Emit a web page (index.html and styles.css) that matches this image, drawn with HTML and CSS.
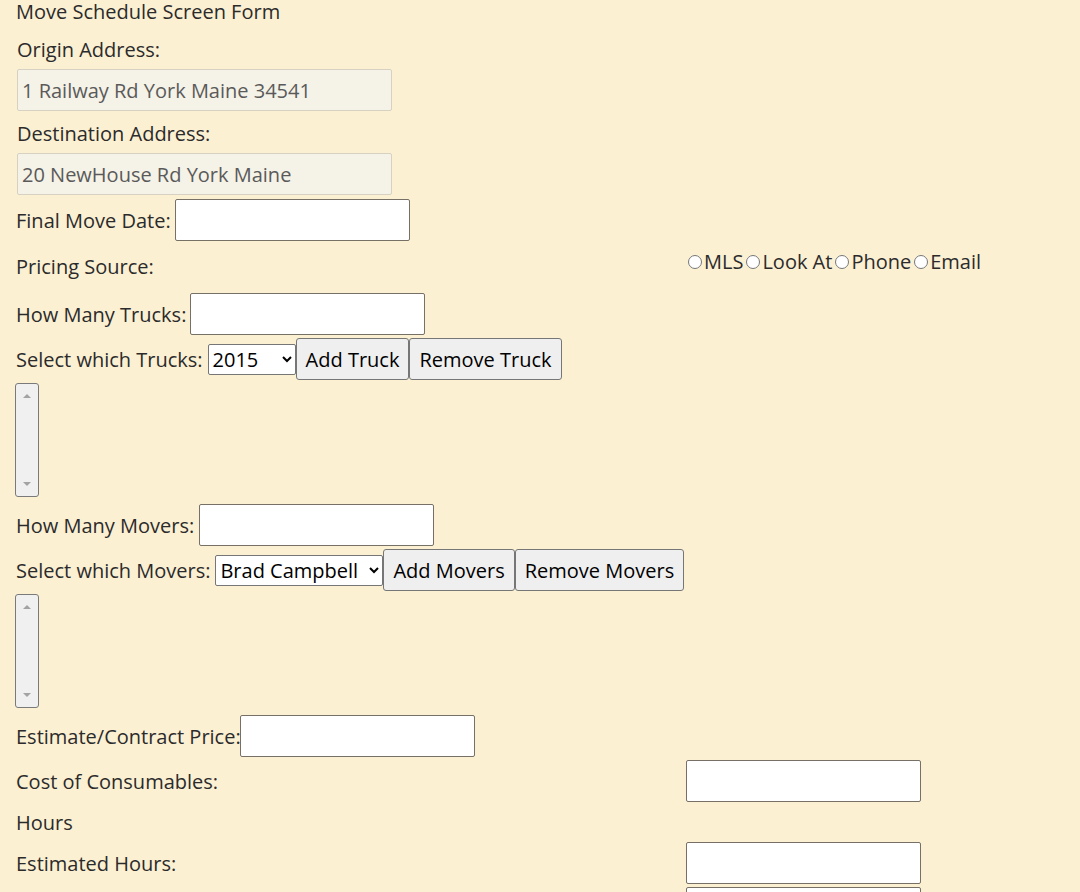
FILE: index.html
```html
<!DOCTYPE html>
<html>
<head>
<meta charset="utf-8">
<title>Move Schedule Screen Form</title>
<link rel="stylesheet" href="styles.css">
</head>
<body>
<form class="form">
  <div class="title">Move Schedule Screen Form</div>

  <label class="block-label first">Origin Address:</label>
  <input class="addr" type="text" value="1 Railway Rd York Maine 34541" disabled>

  <label class="block-label">Destination Address:</label>
  <input class="addr" type="text" value="20 NewHouse Rd York Maine" disabled>

  <div class="row row-date">
    <label>Final Move Date:</label><input class="field" type="text">
  </div>

  <div class="grid-row pricing">
    <label class="plabel">Pricing Source:</label>
    <div class="radios">
      <input type="radio" name="src"><span>MLS</span><input type="radio" name="src"><span>Look At</span><input type="radio" name="src"><span>Phone</span><input type="radio" name="src"><span>Email</span>
    </div>
  </div>

  <div class="row row-trucks">
    <label>How Many Trucks:</label><input class="field" type="text">
  </div>

  <div class="row row-select">
    <label>Select which Trucks:</label><select class="sel sel-truck"><option>2015</option></select><button type="button" class="btn">Add Truck</button><button type="button" class="btn">Remove Truck</button>
  </div>

  <div class="listbox"><span class="arrow up"></span><span class="arrow down"></span></div>

  <div class="row row-movers">
    <label>How Many Movers:</label><input class="field" type="text">
  </div>

  <div class="row row-select">
    <label>Select which Movers:</label><select class="sel sel-mover"><option>Brad Campbell</option></select><button type="button" class="btn">Add Movers</button><button type="button" class="btn">Remove Movers</button>
  </div>

  <div class="listbox"><span class="arrow up"></span><span class="arrow down"></span></div>

  <div class="row row-price">
    <label>Estimate/Contract Price:</label><input class="field" type="text">
  </div>

  <div class="grid-row cost">
    <label>Cost of Consumables:</label><input class="field" type="text">
  </div>

  <div class="hours">Hours</div>

  <div class="grid-row after-hours">
    <label>Estimated Hours:</label><input class="field" type="text">
  </div>

  <div class="grid-row next">
    <label></label><input class="field" type="text">
  </div>
</form>
</body>
</html>
```

FILE: styles.css
```css
html, body {
  margin: 0;
  padding: 0;
  background: #fcf0d3;
}

body {
  font-family: "Open Sans", "Noto Sans", sans-serif;
  font-size: 20px;
  color: #2b2b2b;
  overflow: hidden;
  height: 892px;
}

.form {
  display: flex;
  flex-direction: column;
  align-items: flex-start;
  padding-left: 16px;
}

.title {
  height: 24px;
  line-height: 24px;
}

.block-label {
  display: block;
  height: 26px;
  line-height: 28px;
  margin-top: 12px;
  margin-left: 1px;
}

.block-label + .addr {
  margin-top: 7px;
}

.addr + .block-label {
  margin-top: 9px;
}

.addr {
  box-sizing: border-box;
  width: 375px;
  height: 42px;
  margin-left: 1px;
  padding: 0 4px;
  font: inherit;
  color: #5a5a5a;
  background: #f5f2e7;
  border: 1px solid #d6d1c2;
  border-radius: 2px;
}

.row {
  display: flex;
  align-items: center;
  height: 42px;
  margin-top: 3px;
}

.row-date { margin-top: 4px; }
.row-trucks { margin-top: 9px; }
.row-movers { margin-top: 7px; }
.row-price { margin-top: 7px; }

.row label {
  white-space: nowrap;
}

.field {
  box-sizing: border-box;
  width: 235px;
  height: 42px;
  margin: 0;
  padding: 0 4px;
  font: inherit;
  background: #fff;
  border: 1px solid #767067;
  border-radius: 2px;
}

.row-date .field { margin-left: 4px; }
.row-trucks .field { margin-left: 4px; }
.row-movers .field { margin-left: 5px; }
.row-price .field { margin-left: -1px; }

.sel {
  box-sizing: border-box;
  height: 31px;
  margin: 0 0 0 5px;
  font: inherit;
  color: #000;
  background: #fff;
  border: 1px solid #767676;
  border-radius: 2px;
}

.sel-truck { width: 88px; }
.sel-mover { width: 168px; }

.btn {
  box-sizing: border-box;
  height: 42px;
  margin: 0;
  padding: 0 9px;
  font: inherit;
  color: #000;
  background: #efefef;
  border: 1px solid #767676;
  border-radius: 3px;
}

.listbox {
  box-sizing: border-box;
  position: relative;
  width: 24px;
  height: 114px;
  margin-top: 3px;
  margin-left: -1px;
  background: #f0f0f0;
  border: 1px solid #7a7a7a;
  border-radius: 3px;
}

.arrow {
  position: absolute;
  left: 7px;
  width: 0;
  height: 0;
  border-left: 4px solid transparent;
  border-right: 4px solid transparent;
}

.arrow.up {
  top: 10px;
  border-bottom: 4px solid #a3a3a3;
}

.arrow.down {
  bottom: 10px;
  border-top: 4px solid #a3a3a3;
}

.grid-row {
  display: grid;
  grid-template-columns: 670px 235px;
  align-items: center;
  width: 905px;
  height: 42px;
  margin-top: 3px;
}

.pricing {
  height: 34px;
  margin-top: 9px;
  align-items: start;
}

.plabel {
  line-height: 34px;
}

.radios {
  display: flex;
  align-items: center;
  white-space: nowrap;
  line-height: 24px;
  margin-left: 2px;
}

.radios input {
  flex: none;
  width: 14px;
  height: 14px;
  margin: 0 2px 0 3px;
}

.radios input:first-child {
  margin-left: 0;
}

.hours {
  box-sizing: border-box;
  height: 40px;
  padding-top: 1px;
  line-height: 40px;
}

.grid-row.after-hours {
  margin-top: 0;
}
```
